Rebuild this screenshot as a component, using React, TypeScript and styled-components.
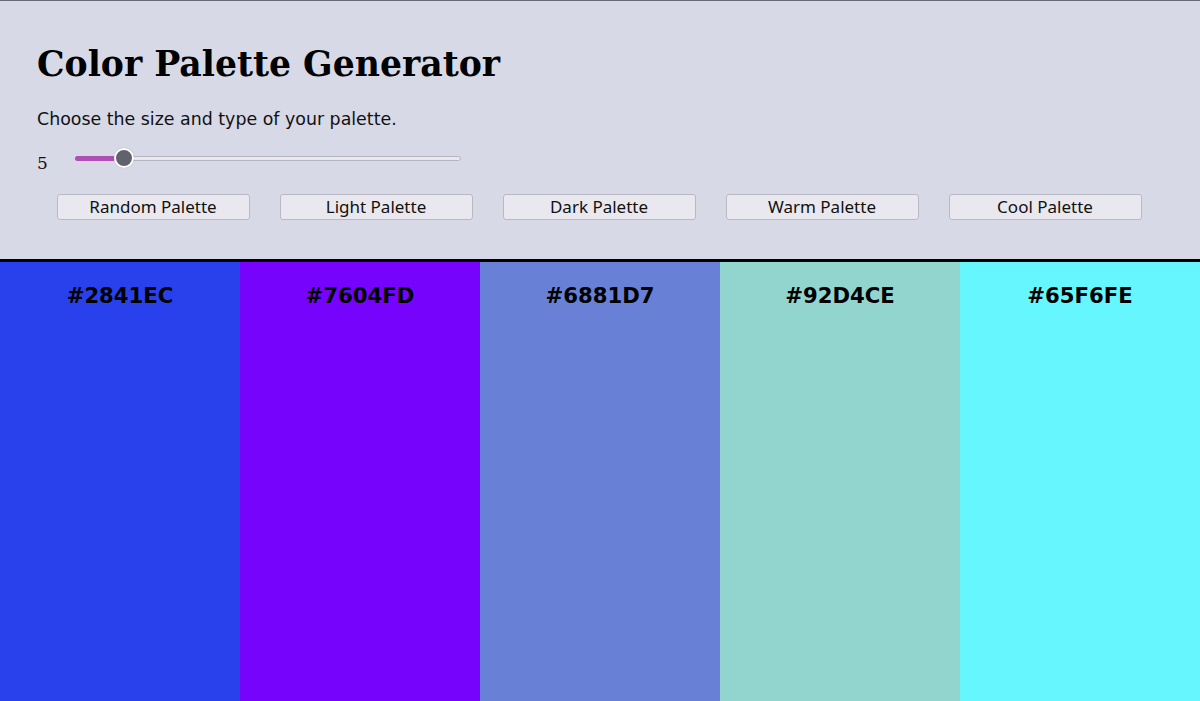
import React, { useState } from "react";
import styled, { createGlobalStyle } from "styled-components";

const Global = createGlobalStyle`
  html, body { margin: 0; padding: 0; height: 100%; }
  body { font-family: "DejaVu Serif", serif; background: #ffffff; overflow: hidden; }
  #root { height: 100%; }
`;

const Page = styled.div`
  display: flex;
  flex-direction: column;
  height: 701px;
`;

const Header = styled.header`
  box-sizing: border-box;
  height: 262px;
  flex: none;
  background: #d7d9e7;
  border-top: 1px solid #6a6a74;
  border-bottom: 3px solid #000000;
  padding: 0 37px;
  display: flex;
  flex-direction: column;
`;

const Title = styled.h1`
  font-family: "DejaVu Serif", serif;
  font-weight: bold;
  font-size: 34.65px;
  line-height: 42px;
  margin: 42px 0 0 0;
  color: #000;
`;

const Subtitle = styled.p`
  font-family: "DejaVu Sans", sans-serif;
  font-size: 17.4px;
  line-height: 20px;
  margin: 24px 0 0 0;
  color: #111;
`;

const SliderRow = styled.div`
  display: flex;
  align-items: center;
  margin-top: 17px;
  height: 24px;
`;

const SizeValue = styled.span`
  font-family: "DejaVu Serif", serif;
  font-size: 17px;
  width: 38px;
  color: #111;
  position: relative;
  top: 5px;
`;

const Track = styled.div`
  position: relative;
  width: 386px;
  height: 5px;
  box-sizing: border-box;
  background: #e8e8ee;
  border: 1px solid #b4b4c0;
  border-radius: 3px;
`;

const Fill = styled.div`
  position: absolute;
  left: -1px;
  top: -1px;
  height: 5px;
  background: #b14db5;
  border-radius: 3px;
`;

const Thumb = styled.div`
  position: absolute;
  top: 50%;
  width: 20px;
  height: 20px;
  box-sizing: border-box;
  margin-left: -10px;
  margin-top: -10px;
  border-radius: 50%;
  background: #62626f;
  border: 2px solid #ffffff;
  box-shadow: 0 0 1px rgba(0,0,0,0.3);
`;

const Buttons = styled.div`
  display: flex;
  justify-content: center;
  gap: 30px;
  margin: 24px -36px 0 -38px;
`;

const Button = styled.button`
  width: 193px;
  height: 26px;
  box-sizing: border-box;
  background: #e9e8ee;
  border: 1px solid #b9b9c6;
  border-radius: 3px;
  font-family: "Noto Sans", sans-serif;
  font-size: 17px;
  line-height: 22px;
  color: #111;
  padding: 0;
  cursor: pointer;
`;

const Palette = styled.main`
  flex: 1;
  display: flex;
`;

const Swatch = styled.div<{ $color: string }>`
  flex: 1;
  background: ${(p) => p.$color};
  display: flex;
  justify-content: center;
`;

const Hex = styled.span`
  font-family: "DejaVu Sans", sans-serif;
  font-weight: bold;
  font-size: 21.2px;
  margin-top: 21px;
  color: #000;
`;

const colors = ["#2841EC", "#7604FD", "#6881D7", "#92D4CE", "#65F6FE"];
const buttonLabels = ["Random Palette", "Light Palette", "Dark Palette", "Warm Palette", "Cool Palette"];

export default function App() {
  const [size] = useState(5);
  const pct = 48 / 386;
  return (
    <Page>
      <Global />
      <Header>
        <Title>Color Palette Generator</Title>
        <Subtitle>Choose the size and type of your palette.</Subtitle>
        <SliderRow>
          <SizeValue>{size}</SizeValue>
          <Track>
            <Fill style={{ width: `${pct * 100 - 2}%` }} />
            <Thumb style={{ left: `${pct * 100}%` }} />
          </Track>
        </SliderRow>
        <Buttons>
          {buttonLabels.map((l) => (
            <Button key={l}>{l}</Button>
          ))}
        </Buttons>
      </Header>
      <Palette>
        {colors.map((c) => (
          <Swatch key={c} $color={c}>
            <Hex>{c}</Hex>
          </Swatch>
        ))}
      </Palette>
    </Page>
  );
}
